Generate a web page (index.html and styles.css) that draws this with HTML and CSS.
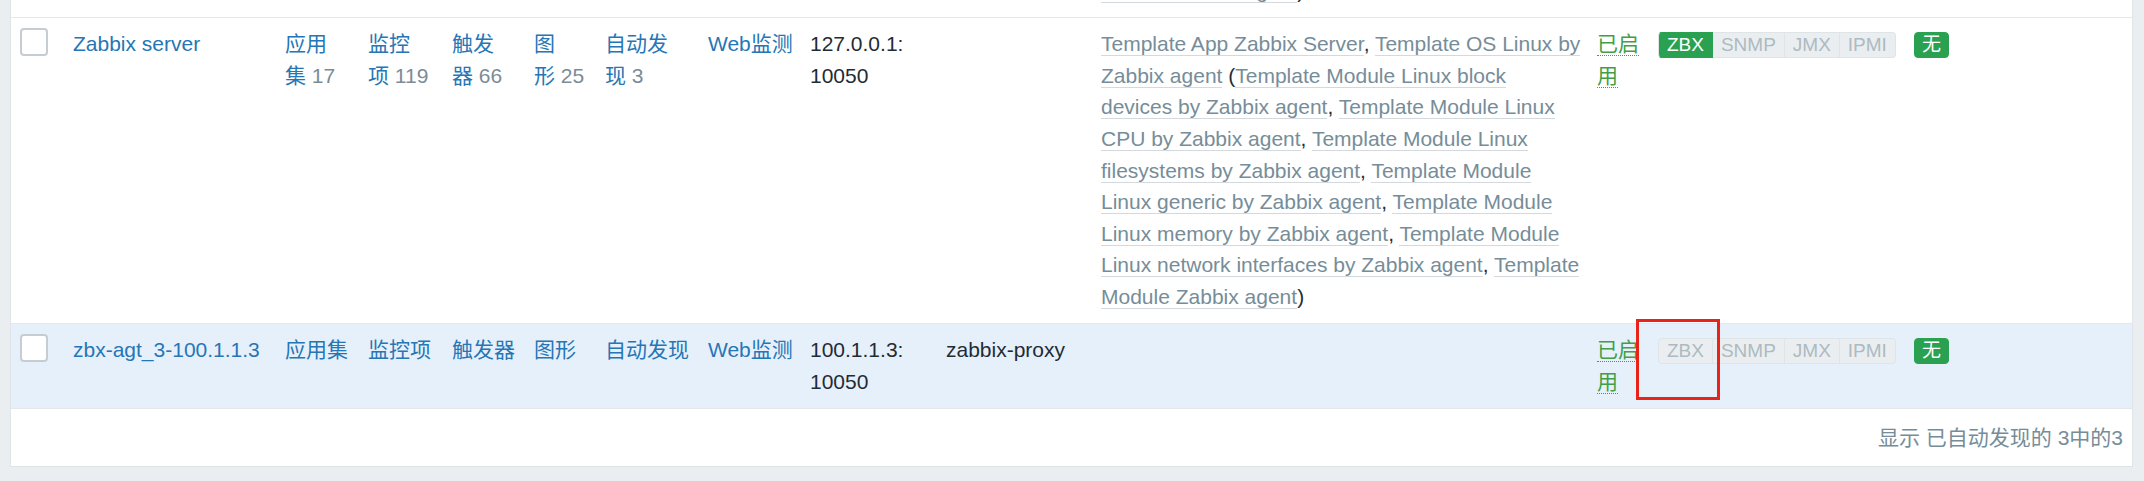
FILE: index.html
```html
<!DOCTYPE html>
<html lang="zh-CN">
<head>
<meta charset="utf-8">
<title>主机</title>
<link rel="stylesheet" href="styles.css">
</head>
<body>
<div class="page">
  <div class="panel">
    <div class="row tail">
      <div class="cell c-tpl"><a class="tl">Module Zabbix agent</a>)</div>
    </div>

    <div class="row">
      <div class="cell c-cb"><span class="cb"></span></div>
      <div class="cell"><a class="lnk">Zabbix server</a></div>
      <div class="cell"><a class="lnk">应用集</a>&nbsp;<span class="num">17</span></div>
      <div class="cell"><a class="lnk">监控项</a>&nbsp;<span class="num">119</span></div>
      <div class="cell"><a class="lnk">触发器</a>&nbsp;<span class="num">66</span></div>
      <div class="cell"><a class="lnk">图形</a>&nbsp;<span class="num">25</span></div>
      <div class="cell"><a class="lnk">自动发现</a>&nbsp;<span class="num">3</span></div>
      <div class="cell nw"><a class="lnk">Web监测</a></div>
      <div class="cell">127.0.0.1: 10050</div>
      <div class="cell"></div>
      <div class="cell c-tpl"><a class="tl">Template App Zabbix Server</a>, <a class="tl">Template OS Linux by Zabbix agent</a> (<a class="tl">Template Module Linux block<br>devices by Zabbix agent</a>, <a class="tl">Template Module Linux CPU by Zabbix agent</a>, <a class="tl">Template Module Linux filesystems by Zabbix agent</a>, <a class="tl">Template Module<br>Linux generic by Zabbix agent</a>, <a class="tl">Template Module Linux memory by Zabbix agent</a>, <a class="tl">Template Module Linux network interfaces by Zabbix agent</a>, <a class="tl">Template Module Zabbix agent</a>)</div>
      <div class="cell"><a class="status">已启用</a></div>
      <div class="cell"><span class="ifaces"><span class="st on">ZBX</span><span class="st">SNMP</span><span class="st">JMX</span><span class="st">IPMI</span></span></div>
      <div class="cell"><span class="st on single">无</span></div>
    </div>

    <div class="row hl">
      <div class="cell c-cb"><span class="cb"></span></div>
      <div class="cell"><a class="lnk">zbx-agt_3-100.1.1.3</a></div>
      <div class="cell"><a class="lnk">应用集</a></div>
      <div class="cell"><a class="lnk">监控项</a></div>
      <div class="cell"><a class="lnk">触发器</a></div>
      <div class="cell"><a class="lnk">图形</a></div>
      <div class="cell"><a class="lnk">自动发现</a></div>
      <div class="cell nw"><a class="lnk">Web监测</a></div>
      <div class="cell">100.1.1.3: 10050</div>
      <div class="cell">zabbix-proxy</div>
      <div class="cell c-tpl"></div>
      <div class="cell"><a class="status">已启用</a></div>
      <div class="cell"><span class="ifaces"><span class="st">ZBX</span><span class="st">SNMP</span><span class="st">JMX</span><span class="st">IPMI</span></span></div>
      <div class="cell"><span class="st on single">无</span></div>
    </div>

    <div class="footer">显示 已自动发现的 3中的3</div>
  </div>
</div>
<div class="mark"></div>
</body>
</html>
```

FILE: styles.css
```css
* {
  box-sizing: border-box;
}

html, body {
  margin: 0;
  background: #ebeef0;
}

body {
  font-family: "Liberation Sans", "Noto Sans CJK SC", sans-serif;
  font-size: 21px;
  line-height: 31.6px;
  color: #1f2c33;
  position: relative;
}

.page {
  padding: 0 11px 15px 10px;
}

.panel {
  background: #ffffff;
  border: 1px solid #dfe4e7;
  border-top: 0;
}

.row {
  display: grid;
  grid-template-columns: 53.4px 212px 83px 84px 82px 71px 103px 102px 136px 155px 496px 61px 256px 1fr;
  border-top: 1px solid #e4e8eb;
}

.row.hl {
  background: #e6f0fb;
}

.cell {
  padding: 10.3px 8.6px;
  min-width: 0;
}

.nw {
  white-space: nowrap;
}

.c-cb {
  padding-left: 9px;
}

.c-tpl {
  padding-right: 0;
}

.tail {
  height: 17px;
  overflow: hidden;
  border-top: 0;
  grid-template-rows: 17px;
  align-items: end;
}

.tail .c-tpl {
  grid-column: 11;
}

.cb {
  display: inline-block;
  width: 28px;
  height: 28px;
  border: 2px solid #c6cdd2;
  border-radius: 4px;
  background: #ffffff;
  vertical-align: top;
}

.lnk {
  color: #2676b5;
  text-decoration: none;
}

.num {
  color: #7a8c97;
}

.tl {
  color: #768d99;
  text-decoration: none;
  border-bottom: 1.7px solid #d3d9dd;
}

.status {
  color: #429e47;
  text-decoration: none;
  border-bottom: 1.7px dotted #429e47;
}

.ifaces {
  display: inline-flex;
  vertical-align: top;
  margin-top: 4px;
}

.st {
  display: inline-block;
  height: 26px;
  line-height: 24px;
  padding: 0 8px;
  font-size: 19px;
  color: #acbbc2;
  background: #ebeef0;
  border: 1px solid #dfe4e7;
  border-left: 0;
}

.ifaces .st:first-child {
  border-left: 1px solid #dfe4e7;
  border-radius: 4px 0 0 4px;
}

.ifaces .st:last-child {
  border-radius: 0 4px 4px 0;
}

.st.on {
  color: #ffffff;
  background: #29a150;
  border-color: #29a150;
}

.st.single {
  display: inline-block;
  vertical-align: top;
  margin-top: 4px;
  padding: 0 7px;
  border-left: 1px solid #29a150;
  border-radius: 4px;
}

.footer {
  border-top: 1px solid #e4e8eb;
  padding: 12.9px 9px 12.9px 9px;
  text-align: right;
  color: #768d99;
}

.mark {
  position: absolute;
  left: 1636px;
  top: 319px;
  width: 84px;
  height: 81px;
  border: 3px solid #e8231a;
}
```
